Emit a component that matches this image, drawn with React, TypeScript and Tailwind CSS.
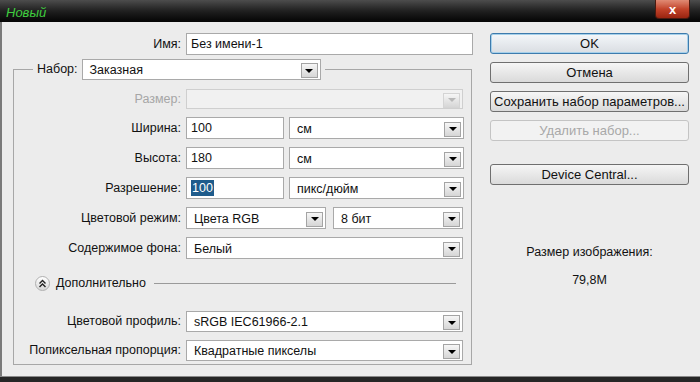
import React from 'react';

function Arrow({ disabled }: { disabled?: boolean }) {
  return (
    <div
      className={`w-[17px] h-[15px] mr-[2px] mt-[2px] shrink-0 flex items-center justify-center border bg-linear-to-b from-[#f6f6f6] to-[#d6d6d6] ${
        disabled ? 'border-[#d4d4d4]' : 'border-[#a4a4a4]'
      }`}
    >
      <div
        className={`w-0 h-0 border-l-[4px] border-r-[4px] border-t-[4px] border-l-transparent border-r-transparent ${
          disabled ? 'border-t-[#b8b8b8]' : 'border-t-black'
        }`}
      />
    </div>
  );
}

function Select({ value, w, disabled, h = 'h-[22px]' }: { value?: string; w: string; disabled?: boolean; h?: string }) {
  return (
    <div
      className={`${w} ${h} flex items-center border ${
        disabled ? 'bg-[#f1f1f1] border-[#cfcfcf]' : 'bg-white border-[#a9a9a9]'
      }`}
    >
      <span className="flex-1 pl-[7px] pt-[2px] whitespace-nowrap">{value}</span>
      <Arrow disabled={disabled} />
    </div>
  );
}

function Input({ children, w }: { children: React.ReactNode; w: string }) {
  return (
    <div className={`${w} h-[22px] flex items-center bg-white border border-[#a9a9a9] pl-[4px]`}>{children}</div>
  );
}

function Row({ label, disabled, children, h = 'h-[22px]' }: { label: string; disabled?: boolean; children: React.ReactNode; h?: string }) {
  return (
    <div className={`flex items-center ${h}`}>
      <span className={`w-[167px] shrink-0 text-right ${disabled ? 'text-[#a6a6a6]' : ''}`}>{label}</span>
      <div className="ml-[5px] flex gap-[5px]">{children}</div>
    </div>
  );
}

function Btn({ children, primary, disabled, className = '' }: { children: React.ReactNode; primary?: boolean; disabled?: boolean; className?: string }) {
  return (
    <div
      className={`w-[199px] h-[21px] rounded-[3px] border flex items-center justify-center overflow-hidden whitespace-nowrap ${className} ${
        disabled
          ? 'border-[#c4c4c4] bg-[#f2f2f2] text-[#a8a8a8]'
          : primary
          ? 'border-[#3d7bad] bg-linear-to-b from-[#f4f7fa] to-[#d9dde2] shadow-[inset_0_0_0_1px_#a6d0ea]'
          : 'border-[#6f6f6f] bg-linear-to-b from-[#f6f6f6] to-[#dadada]'
      }`}
    >
      {children}
    </div>
  );
}

export default function App() {
  return (
    <div className="w-[700px] h-[382px] bg-[#ececec] flex flex-col overflow-hidden text-[12.5px] text-[#111] font-['Liberation_Sans',Arial,sans-serif]">
      {/* title bar */}
      <div className="h-[22px] shrink-0 flex items-start justify-between bg-linear-to-b from-[#4d4d4d] via-[#202020] to-[#050505]">
        <span className="pl-[6px] pt-[3px] italic text-[#3fcf3f] text-[13px]">Новый</span>
        <div className="mr-[10px] w-[35px] h-[19px] rounded-b-[4px] border border-t-0 border-[#4a1a10] bg-linear-to-b from-[#e08a74] via-[#c2432a] to-[#9a2410] flex items-center justify-center text-white font-bold text-[13px] leading-none">
          x
        </div>
      </div>

      <div className="flex-1 flex border-l-[2px] border-[#7a7a7a]">
        {/* left column */}
        <div className="w-[478px] shrink-0 flex flex-col">
          <div className="pt-[11px] flex items-center">
            <span className="w-[179px] text-right">Имя:</span>
            <div className="ml-[5px]">
              <Input w="w-[287px]">Без имени-1</Input>
            </div>
          </div>

          <fieldset className="mt-[4px] ml-[11px] w-[459px] border border-[#a7a7a7] pb-[3px]">
            <legend className="ml-[19px] px-[4px]">
              <div className="flex items-center gap-[4px]">
                <span>Набор:</span>
                <Select value="Заказная" w="w-[239px]" h="h-[21px]" />
              </div>
            </legend>

            <div className="flex flex-col gap-[8px] mt-[9px]">
              <Row label="Размер:" disabled h="h-[20px]">
                <Select w="w-[277px]" h="h-[20px]" disabled />
              </Row>
              <Row label="Ширина:">
                <Input w="w-[98px]">100</Input>
                <Select value="см" w="w-[175px]" />
              </Row>
              <Row label="Высота:">
                <Input w="w-[98px]">180</Input>
                <Select value="см" w="w-[175px]" />
              </Row>
              <Row label="Разрешение:">
                <Input w="w-[98px]">
                  <span className="bg-[#1f5c8c] text-white px-[1px] leading-[16px]">100</span>
                </Input>
                <Select value="пикс/дюйм" w="w-[175px]" />
              </Row>
              <Row label="Цветовой режим:">
                <Select value="Цвета RGB" w="w-[140px]" />
                <div className="ml-[2px]">
                  <Select value="8 бит" w="w-[130px]" />
                </div>
              </Row>
              <Row label="Содержимое фона:">
                <Select value="Белый" w="w-[277px]" />
              </Row>
            </div>

            <div className="mt-[14px] h-[20px] flex items-center">
              <div className="ml-[21px] w-[15px] h-[15px] rounded-full border border-[#b0b0b0] bg-linear-to-b from-white to-[#d8d8d8] flex items-center justify-center">
                <svg width="9" height="9" viewBox="0 0 9 9" fill="none" stroke="#222" strokeWidth="1.4">
                  <path d="M1.5 4.5 L4.5 1.5 L7.5 4.5" />
                  <path d="M1.5 8 L4.5 5 L7.5 8" />
                </svg>
              </div>
              <span className="ml-[6px]">Дополнительно</span>
              <div className="flex-1 ml-[8px] mr-[15px] border-t border-[#9a9a9a]" />
            </div>

            <div className="flex flex-col gap-[8px] mt-[18px]">
              <Row label="Цветовой профиль:" h="h-[21px]">
                <Select value="sRGB IEC61966-2.1" w="w-[277px]" h="h-[21px]" />
              </Row>
              <Row label="Попиксельная пропорция:" h="h-[21px]">
                <Select value="Квадратные пикселы" w="w-[277px]" h="h-[21px]" />
              </Row>
            </div>
          </fieldset>
        </div>

        {/* right column */}
        <div className="pl-[10px] pt-[11px] flex flex-col text-[13px]">
          <div className="flex flex-col gap-[8px]">
            <Btn primary>OK</Btn>
            <Btn>Отмена</Btn>
            <Btn>Сохранить набор параметров...</Btn>
            <Btn disabled>Удалить набор...</Btn>
          </div>
          <Btn className="mt-[23px]">Device Central...</Btn>
          <div className="w-[199px] mt-[58px] flex flex-col items-center gap-[9px] text-[12.5px]">
            <span>Размер изображения:</span>
            <span>79,8M</span>
          </div>
        </div>
      </div>

      {/* bottom edge */}
      <div className="h-[6px] shrink-0 border-t border-[#8a8a8a] bg-[#262626]" />
    </div>
  );
}
